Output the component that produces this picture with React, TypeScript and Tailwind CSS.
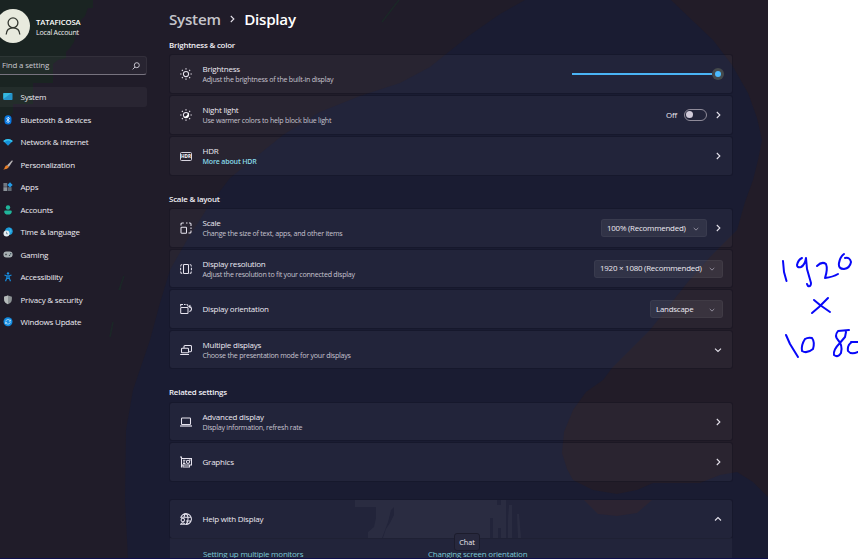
import type { ReactNode } from "react";

function Wallpaper() {
  return (
    <svg className="absolute inset-0" width="768" height="559" viewBox="0 0 768 559">
      <rect width="768" height="559" fill="#201c29" />
      <path d="M660 0H768V559H560V330Z" fill="#221c28" />
      <path
        d="M525 0H671L694 22L713 40L732 65L748 93L757 118L762 140L758 160L753 180L745 202L737 230L710 257L687 283L650 330L612 368L603 380L586 392L573 410L564 432L562 453L567 469L573 480L593 490L617 494L637 490L653 483L700 483L720 475L737 472L753 482L768 497V559H128L125 500L126 430L133 390L150 340L160 303L170 270L187 240L208 207L230 178L283 135L320 112L360 96L400 83L430 67L470 35L500 14Z"
        fill="#1a1c32"
      />
      <path d="M584 500H652L637 513L617 516L598 514Z" fill="#241c2a" />
      <path d="M0 0H93V8H88L85 16L81 20V26L77 30L74 42L70 48L66 52V58L58 60L53 64V83H33V97L33 104H13V113L0 124Z" fill="#1a2422" />
      <path d="M399 0L382 22M124 276L119 290M113 322L110 337M121 284l-1 6" stroke="#1b2727" strokeWidth="1.500" fill="none" />
    </svg>
  );
}

function Icon({ children }: { children: ReactNode }) {
  return (
    <svg width="12" height="12" viewBox="0 0 12 12" fill="none" stroke="#e6e3ee" strokeWidth="1.050" className="shrink-0">
      {children}
    </svg>
  );
}

const rays = "M6 .2v1.300M6 10.500v1.300M.2 6h1.300M10.500 6h1.300M1.900 1.900l.9.9M9.200 9.200l.9.9M1.900 10.100l.9-.9M9.200 2.800l.9-.9";

const icons = {
  sun: <Icon><circle cx="6" cy="6" r="2.600" /><path d={rays} strokeWidth="1.200" /></Icon>,
  night: <Icon><circle cx="6" cy="6" r="2.600" /><path d="M8 3.600A3 3 0 1 1 3.600 8C6.500 8 8 6 8 3.600Z" fill="#fff" stroke="none" /><path d={rays} strokeWidth="1.200" /></Icon>,
  hdr: (
    <span className="flex h-[9px] w-3 items-center justify-center rounded-[1.500px] border border-[#d8d5e0] text-[4.600px] leading-none font-bold text-white">HDR</span>
  ),
  scale: <Icon><rect x="1" y="5.200" width="5.500" height="6" rx=".7" /><path d="M1 3.500V2Q1 1 2 1H3.800M6 1H7.500M9 1h1q1 0 1 1v2M11 5.500v1.500M11 8.500v1.500q0 1-1 1H8.500" /></Icon>,
  resolution: <Icon><rect x="3.500" y="1.500" width="5" height="9" rx=".7" /><path d="M2.200 1.500Q.6 1.500.6 3.500M.6 4.800v2.400M.6 8.500q0 2 1.600 2M9.800 1.500q1.600 0 1.600 2M11.400 4.800v2.400M11.400 8.500q0 2-1.600 2" /></Icon>,
  orientation: <Icon><rect x=".7" y="4.500" width="7.300" height="6" rx=".8" /><path d="M.7 3.400V1.500h2.300M4 1.500h1.600M6.500 1.500q1.500 0 1.500 1.900M9.300 3.600q2.200 0 2.200 2.400 0 2.200-2.200 2.400M10.400 2 9 3.500l1.400 1.400" /></Icon>,
  multiple: <Icon><path d="M4 4V2.500Q4 1.500 5 1.500h5.500q1 0 1 1v4.200q0 1-1 1H9" /><rect x="1.500" y="4.200" width="7" height="4.600" rx=".8" /><path d="M.2 10.500h8.800" /></Icon>,
  laptop: <Icon><rect x="1.500" y="2" width="9" height="6.500" rx=".7" /><path d="M0 10h12" strokeWidth="1.200" /></Icon>,
  graphics: <Icon><path d="M0 1h1.500V11.500M1.500 2.500h10v6.500H1.500M3 9.200v1.800h6.500V9.200" /><circle cx="8" cy="5.800" r="1.600" /><path d="M3 4.300h2.400M3 6h2M3 7.500h2.400M9 4h1.700" /></Icon>,
  help: <Icon><path d="M1 4.200h10M6 8h5M5.500 11.400A5.400 5.400 0 1 0 .7 5M4 4.200Q4.500 1 6 .7 8.200 2 8 6t-2 5.300" /><circle cx="2.800" cy="7" r="1.700" /><path d="M.6 11.300Q2.800 8.300 5 11.300Z" /></Icon>,
};

function Chevron({ dir = "right", small = false }: { dir?: "right" | "down" | "up"; small?: boolean }) {
  const d = dir === "right" ? "M2.800 1 5.900 4 2.800 7" : dir === "down" ? "M1 2.600 4 5.500 7 2.600" : "M1 5.500 4 2.600 7 5.500";
  return (
    <svg width={small ? 6 : 8} height={small ? 6 : 8} viewBox="0 0 8 8" fill="none" stroke={small ? "#aaa6b5" : "#e6e3ec"} strokeWidth="1.050" className="shrink-0">
      <path d={d} />
    </svg>
  );
}

function Select({ label, width }: { label: string; width: string }) {
  return (
    <div className={`flex h-[18px] items-center justify-between rounded-[3px] border border-white/[0.040] bg-white/[0.070] pt-px pr-[7px] pl-[5px] text-[7.900px] tracking-[-0.22px] text-[#edeaf2] ${width}`}>
      <span>{label}</span>
      <Chevron dir="down" small />
    </div>
  );
}

function Card({ icon, title, sub, link, children, height = "h-[38px]" }: { icon: ReactNode; title: string; sub?: string; link?: boolean; children?: ReactNode; height?: string }) {
  return (
    <div className={`flex items-center rounded-[2px] bg-white/[0.040] pr-2.5 pl-[10px] shadow-[0_0_0_1px_rgba(16,16,30,0.28)] ${height}`}>
      <div className="flex w-[22.500px] items-center">{icon}</div>
      <div className="flex flex-1 flex-col">
        <span className="text-[8px] leading-[10px] tracking-[-0.22px] text-[#edeaf2]">{title}</span>
        {sub && <span className={link ? "text-[7.100px] leading-[10px] font-semibold tracking-[-0.2px] text-[#86d8e7]" : "text-[7.100px] leading-[10px] tracking-[-0.24px] text-[#c6c3cf]"}>{sub}</span>}
      </div>
      <div className="flex items-center">{children}</div>
    </div>
  );
}

function NavIcon({ children }: { children: ReactNode }) {
  return <svg width="10" height="10" viewBox="0 0 10 10" fill="none" className="-ml-px shrink-0">{children}</svg>;
}

const nav: { label: string; icon: ReactNode }[] = [
  { label: "System", icon: <NavIcon><rect x=".3" y="1" width="9.200" height="7" rx=".7" fill="#2493ca" /><path d="M.3 1.700q0-.7.7-.7h7.500L.3 7Z" fill="#35b8df" /></NavIcon> },
  { label: "Bluetooth & devices", icon: <NavIcon><rect x="1.500" y=".3" width="7" height="9.200" rx="3.500" fill="#0878e0" /><path d="m3.300 3.200 3.200 3L5 7.700V2l1.500 1.500-3.200 3" stroke="#e8f4ff" strokeWidth=".8" /></NavIcon> },
  { label: "Network & internet", icon: <NavIcon><path d="M.2 4Q5-.2 9.800 4L5 8.700Z" fill="#1690d8" /><path d="M.2 4Q5-.2 9.800 4L8.500 5Q5 2 1.500 5Z" fill="#35c5ee" /></NavIcon> },
  { label: "Personalization", icon: <NavIcon><path d="m9 .2.9.8L5.800 7 4 5.500Z" fill="#b7b4b5" /><path d="m4 5.300 2 1.800Q4.500 9.700.3 9.500 1.700 8.500 1.800 7.300 2.500 5.300 4 5.300" fill="#e77e27" /></NavIcon> },
  { label: "Apps", icon: <NavIcon><path d="M.4 1h3.800v3.800H.4Z" fill="#717780" /><path d="M.4 5.200h3.800V9H.4Z" fill="#8b9299" /><path d="M4.700 5.200h3.900V9H4.700Z" fill="#616973" /><path d="m7 .2 2.700 2.700L7 5.400 4.400 2.900Z" fill="#239be6" /></NavIcon> },
  { label: "Accounts", icon: <NavIcon><circle cx="5" cy="2.500" r="2.200" fill="#20b59b" /><path d="M1.200 6.400q0-1 1-1h5.600q1 0 1 1Q8.800 9.500 5 9.500T1.200 6.400" fill="#20b59b" /></NavIcon> },
  { label: "Time & language", icon: <NavIcon><circle cx="5.900" cy="4.200" r="3.800" fill="#199bdb" /><path d="M6 .5Q9 3 6 8M2 4h7" stroke="#55c6ef" strokeWidth=".6" /><circle cx="3.500" cy="6.500" r="3" fill="#e5edf1" /><path d="M3.500 4.800v2H5" stroke="#46637a" strokeWidth=".6" /></NavIcon> },
  { label: "Gaming", icon: <NavIcon><rect x=".4" y="1.600" width="9.200" height="6" rx="3" fill="#a7afb2" /><path d="M2 4.500h2M3 3.500v2" stroke="#4b5256" strokeWidth=".8" /><circle cx="6.500" cy="5.400" r=".7" fill="#394a4f" /><circle cx="7.700" cy="3.700" r=".7" fill="#36505b" /></NavIcon> },
  { label: "Accessibility", icon: <NavIcon><circle cx="5" cy="1.400" r="1.200" fill="#1a91e6" /><path d="m1.500 3 2.400 1v1.800L2.500 9.200M8.500 3 6.100 4v1.800l1.400 3.400M4 3.900h2v2.500H4Z" stroke="#1689d9" strokeWidth="1.200" /></NavIcon> },
  { label: "Privacy & security", icon: <NavIcon><path d="M5 .4 8.900 1.700V4Q8.900 7.700 5 9.300 1.100 7.700 1.100 4V1.700Z" fill="#8c9294" /><path d="M5 .4V9.300Q1.100 7.700 1.100 4V1.700Z" fill="#b5baba" /></NavIcon> },
  { label: "Windows Update", icon: <NavIcon><circle cx="5" cy="4.800" r="4.500" fill="#118ae0" /><path d="M2.600 4.500Q3 2.500 5 2.500t2.300 1.600M7.400 2.600v1.600H5.800M7.400 5.100Q7 7.100 5 7.100T2.700 5.500M2.600 7V5.400h1.600" stroke="#d0ecfc" strokeWidth=".7" /></NavIcon> },
];

function Sidebar() {
  return (
    <aside className="flex w-[147px] shrink-0 flex-col">
      <div className="mt-[9px] flex h-[34px] items-center gap-[7px]">
        <div className="-ml-1 flex h-[34px] w-[34px] shrink-0 items-center justify-center rounded-full bg-[#e8eade]">
          <svg width="16" height="18" viewBox="0 0 16 18" fill="none" stroke="#343831" strokeWidth="1.300" className="-ml-[1px]">
            <circle cx="8" cy="5.800" r="4.900" /><path d="M1.200 17.500Q1.500 10.800 8 10.800t6.800 6.700" />
          </svg>
        </div>
        <div className="-ml-px flex flex-col pt-[2px]">
          <span className="text-[7.700px] leading-[10px] font-semibold tracking-[-0.1px] text-white">TATAFICOSA</span>
          <span className="text-[7.100px] leading-[10px] tracking-[-0.22px] text-[#edeeee]">Local Account</span>
        </div>
      </div>
      <div className="mt-[13px] flex h-[19px] items-center justify-between rounded-r-[3px] border border-l-0 border-white/[0.050] border-b-[#77737f] bg-white/[0.040] pr-1.5 pl-0.5">
        <span className="text-[7.900px] tracking-[-0.15px] text-[#c9c7cf]">Find a setting</span>
        <svg width="8" height="8" viewBox="0 0 8 8" fill="none" stroke="#d5d3dc" strokeWidth=".9"><circle cx="4.800" cy="3.200" r="2.500" /><path d="M3 5 .7 7.400" /></svg>
      </div>
      <nav className="mt-[12px] flex flex-col">
        {nav.map((item, i) => (
          <div key={item.label} className={`mb-[2.550px] flex h-5 items-center gap-2 rounded-r-[3px] pl-[3.500px] ${i === 0 ? "bg-white/[0.045]" : ""}`}>
            {item.icon}
            <span className="text-[8px] tracking-[-0.2px] text-[#eeecf3]">{item.label}</span>
          </div>
        ))}
      </nav>
    </aside>
  );
}

function Heading({ children }: { children: ReactNode }) {
  return <h2 className="-ml-px h-3 text-[7.900px] leading-[12px] font-semibold tracking-[-0.2px] text-[#f1eff5]">{children}</h2>;
}

function InkNote() {
  return (
    <svg className="mt-[240px]" width="90" height="130" viewBox="0 0 90 130" fill="none" stroke="#0808f8" strokeWidth="2" strokeLinecap="round" strokeLinejoin="round">
      <path d="M15 21 16 32 18.500 41" />
      <path d="M34 18Q30 20 29 25 29 28 33 27 37 25 38 18L39 29 43 43Q43 47 40 46L39 44" />
      <path d="M49 26Q54 21 58 24 60 29 57 38 65 37 70 34" />
      <path d="M76 14Q72 17 71 23 70 29 76 29 82 28 83 22 82 17 77 18" />
      <path d="m46 60 6 5 10 7M60 58 51 67 44 73" />
      <path d="m18 95 4 9 8 13" />
      <path d="M37 99Q33 105 34 111 39 114 45 109 47 102 44 98 40 97 37 99" />
      <path d="M81 90 70 91Q66 96 70 100 75 105 73 113 70 118 66 115 65 110 71 104L77 97 78 92" />
      <path d="M84 102Q79 105 80 111 83 115 90 112M83 102 90 102" />
    </svg>
  );
}

export default function App() {
  return (
    <div className="relative flex h-[559px] w-[858px] overflow-hidden bg-white font-['Open_Sans','Noto_Sans',sans-serif]">
      <Wallpaper />
      <div className="relative flex w-[768px] shrink-0 overflow-hidden border-b border-[#10104c]">
        <Sidebar />
        <main className="ml-[23px] flex w-[562px] shrink-0 flex-col">
          <h1 className="-ml-px mt-[8px] flex h-[22px] items-center text-[15.200px] leading-[22px] font-semibold tracking-[-0.25px] text-white">
            <span className="text-[#c5c5cb]">System</span>
            <span className="mr-2 ml-[7.500px] flex"><Chevron /></span>
            <span>Display</span>
          </h1>
          <section className="mt-[9px]">
            <Heading>Brightness &amp; color</Heading>
            <div className="mt-1 flex flex-col gap-[3px]">
              <Card icon={icons.sun} title="Brightness" sub="Adjust the brightness of the built-in display">
                <div className="h-[2.500px] w-[140px] bg-[#4ab4f5]" />
                <div className="-mr-0.5 flex h-3 w-3 items-center justify-center rounded-full bg-[#454a4c]"><div className="h-1.5 w-1.5 rounded-full bg-[#4cbcff]" /></div>
              </Card>
              <Card icon={icons.night} title="Night light" sub="Use warmer colors to help block blue light">
                <span className="mr-[7px] pt-px text-[7.900px] tracking-[-0.15px] text-[#edeaf2]">Off</span>
                <div className="mr-[7px] flex h-3 w-[23px] items-center rounded-full border border-[#8f8b99] pl-[1px]"><div className="h-[7px] w-[7px] rounded-full bg-[#d0cad9]" /></div>
                <Chevron />
              </Card>
              <Card icon={icons.hdr} title="HDR" sub="More about HDR" link><Chevron /></Card>
            </div>
          </section>
          <section className="mt-[18px]">
            <Heading>Scale &amp; layout</Heading>
            <div className="mt-1 flex flex-col gap-[3px]">
              <Card icon={icons.scale} title="Scale" sub="Change the size of text, apps, and other items">
                <Select label="100% (Recommended)" width="w-[106px] mr-[7px]" /><Chevron />
              </Card>
              <Card icon={icons.resolution} title="Display resolution" sub="Adjust the resolution to fit your connected display" height="h-[37px]">
                <Select label="1920 × 1080 (Recommended)" width="w-[129px] -mr-px" />
              </Card>
              <Card icon={icons.orientation} title="Display orientation">
                <Select label="Landscape" width="w-[73px] -mr-px" />
              </Card>
              <Card icon={icons.multiple} title="Multiple displays" sub="Choose the presentation mode for your displays" height="h-[37px]"><Chevron dir="down" /></Card>
            </div>
          </section>
          <section className="mt-[18px]">
            <Heading>Related settings</Heading>
            <div className="mt-[5px] flex flex-col gap-[3px]">
              <Card icon={icons.laptop} title="Advanced display" sub="Display information, refresh rate" height="h-[37px]"><Chevron /></Card>
              <Card icon={icons.graphics} title="Graphics"><Chevron /></Card>
            </div>
          </section>
          <section className="relative mt-[19px] flex flex-col">
            <svg className="absolute top-0 left-0" width="562" height="38" viewBox="0 0 562 38" fill="#fff" fillOpacity=".04">
              <path d="M185 0H327V5H331V0H336V38H331V28H328V38H323V18H320V38H213L216 29 220 23 224 15V7L221 10 218 22 212 38H198V32L204 27 206 18V7H185ZM339 5h3V38h-4V20ZM347 14h2l2 24h-3Z" />
            </svg>
            <Card icon={icons.help} title="Help with Display"><Chevron dir="up" /></Card>
            <div className="flex h-[21px] items-end bg-white/[0.040] pl-[33px] text-[8px] leading-[10px] tracking-[-0.22px] text-[#7cc8d7]">
              <span className="w-[225px]">Setting up multiple monitors</span>
              <span>Changing screen orientation</span>
            </div>
            <div className="absolute top-[33px] left-[284px] flex h-[18px] w-[26px] items-center justify-center rounded-[3px] border border-[#1c1c2c] bg-[#27283d] text-[7.300px] tracking-[-0.1px] text-[#edeaf2]">Chat</div>
          </section>
        </main>
      </div>
      <InkNote />
    </div>
  );
}
